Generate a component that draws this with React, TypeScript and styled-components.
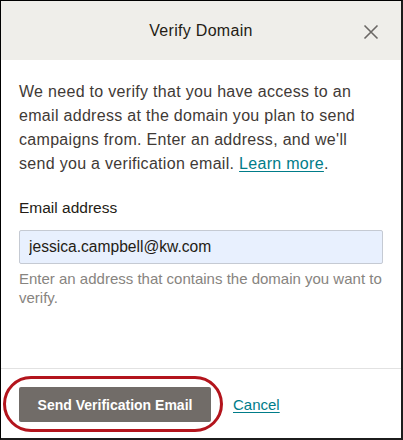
import React from 'react';
import styled, { createGlobalStyle } from 'styled-components';

const GlobalStyle = createGlobalStyle`
  html, body {
    margin: 0;
    padding: 0;
    background: #fff;
  }
  * {
    box-sizing: border-box;
  }
`;

const Frame = styled.div`
  position: relative;
  display: flex;
  flex-direction: column;
  width: 403px;
  height: 440px;
  border-top: 1px solid #000;
  border-left: 1px solid #000;
  border-right: 2px solid #1c1c1c;
  border-bottom: 2px solid #1c1c1c;
  background: #fff;
  font-family: 'Liberation Sans', Arial, sans-serif;
  color: #241c15;
`;

const Header = styled.div`
  display: flex;
  align-items: center;
  justify-content: center;
  position: relative;
  height: 59px;
  background: #efeeea;
`;

const Title = styled.h1`
  margin: 0;
  font-size: 16px;
  font-weight: normal;
  letter-spacing: 0.3px;
  color: #241c15;
`;

const CloseButton = styled.button`
  position: absolute;
  right: 22px;
  top: 23px;
  width: 16px;
  height: 16px;
  padding: 0;
  border: none;
  background: none;
  display: flex;
  align-items: center;
  justify-content: center;
  cursor: pointer;
`;

const Body = styled.div`
  flex: 1;
  padding: 20px 18px 0 18px;
`;

const Intro = styled.p`
  margin: 0;
  font-size: 16px;
  line-height: 24px;
  letter-spacing: 0.3px;
  color: #3f3a36;
`;

const Link = styled.a`
  color: #007c89;
  text-decoration: underline;
  text-underline-offset: 2px;
  cursor: pointer;
`;

const Label = styled.label`
  display: block;
  margin-top: 20px;
  margin-bottom: 10px;
  font-size: 15.5px;
  line-height: 24px;
  color: #241c15;
`;

const Input = styled.input`
  display: block;
  width: 100%;
  height: 34px;
  padding: 0 9px;
  border: 1px solid #c5cad3;
  border-radius: 2px;
  background: #e8f0fe;
  font-family: 'Liberation Sans', Arial, sans-serif;
  font-size: 15.6px;
  color: #241c15;
  outline: none;
`;

const Help = styled.div`
  margin-top: 5px;
  font-size: 15px;
  line-height: 19px;
  color: #878480;
`;

const Footer = styled.div`
  position: relative;
  display: flex;
  align-items: center;
  gap: 22px;
  padding: 18px 18px 16px;
  border-top: 1px solid #e2e2e2;
`;

const PrimaryButton = styled.button`
  width: 192px;
  height: 35px;
  border: none;
  border-radius: 2px;
  background: #716c68;
  color: #fff;
  font-family: 'Liberation Sans', Arial, sans-serif;
  font-size: 14px;
  font-weight: bold;
  cursor: pointer;
`;

const CancelLink = styled(Link)`
  font-size: 15px;
`;

const Highlight = styled.div`
  position: absolute;
  left: 2px;
  top: 7px;
  width: 220px;
  height: 56px;
  border: 3px solid #b3141c;
  border-radius: 28px;
  pointer-events: none;
`;

const CloseIcon = () => (
  <svg width="16" height="16" viewBox="0 0 16 16">
    <path d="M1.5 1.5 L14.5 14.5 M14.5 1.5 L1.5 14.5" stroke="#6b6865" strokeWidth="1.6" fill="none" />
  </svg>
);

const App = () => (
  <>
    <GlobalStyle />
    <Frame>
      <Header>
        <Title>Verify Domain</Title>
        <CloseButton aria-label="Close">
          <CloseIcon />
        </CloseButton>
      </Header>
      <Body>
        <Intro>
          We need to verify that you have access to an email address at the domain you plan to send
          campaigns from. Enter an address, and we'll send you a verification email.{' '}
          <Link>Learn more</Link>.
        </Intro>
        <Label htmlFor="email">Email address</Label>
        <Input id="email" defaultValue="jessica.campbell@kw.com" />
        <Help>Enter an address that contains the domain you want to verify.</Help>
      </Body>
      <Footer>
        <PrimaryButton>Send Verification Email</PrimaryButton>
        <CancelLink>Cancel</CancelLink>
        <Highlight />
      </Footer>
    </Frame>
  </>
);

export default App;
